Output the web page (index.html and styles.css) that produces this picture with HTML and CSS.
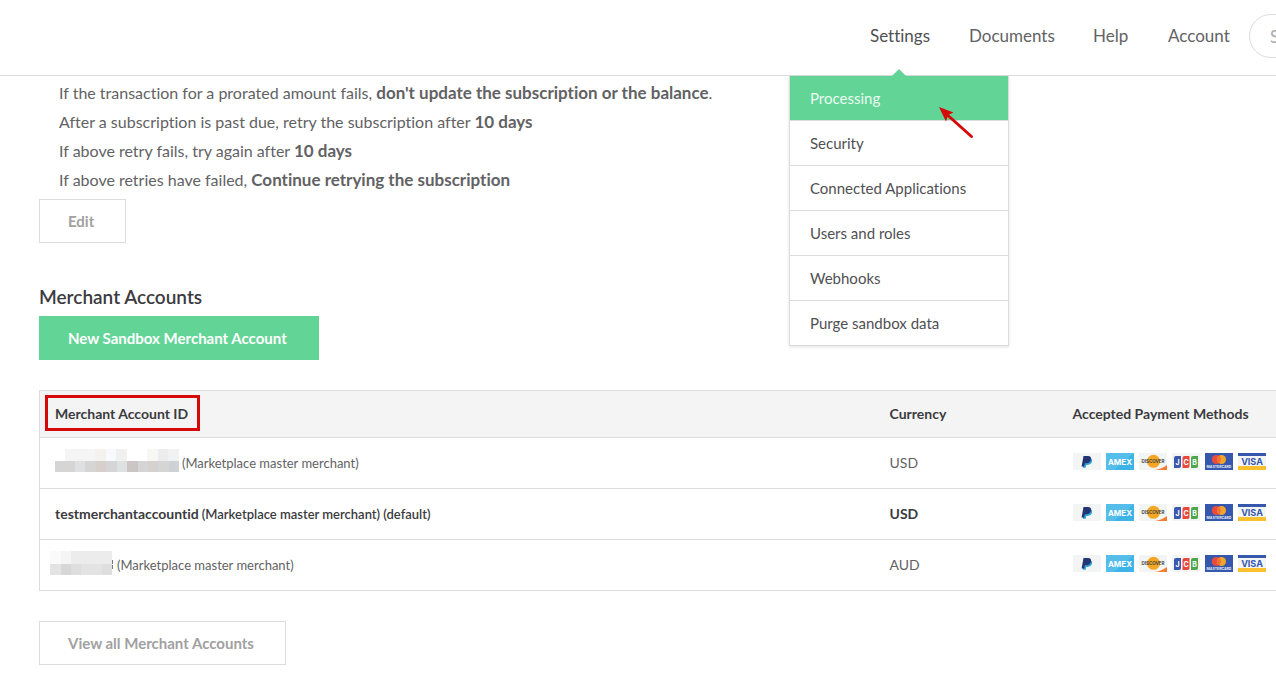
FILE: index.html
```html
<!DOCTYPE html>
<html lang="en">
<head>
<meta charset="utf-8">
<title>Processing</title>
<link rel="stylesheet" href="styles.css">
</head>
<body>
<header class="topbar">
  <nav class="nav" aria-label="Main">
    <div class="nav-item">
      <a class="nav-link current" href="#">Settings</a>
      <div class="menu">
        <a class="menu-link active" href="#">Processing</a>
        <a class="menu-link" href="#">Security</a>
        <a class="menu-link" href="#">Connected Applications</a>
        <a class="menu-link" href="#">Users and roles</a>
        <a class="menu-link" href="#">Webhooks</a>
        <a class="menu-link" href="#">Purge sandbox data</a>
        <svg class="pointer" width="36" height="34" viewBox="0 0 36 34" aria-hidden="true"><path d="M9 8.500L32.500 29.500" stroke="#d60808" stroke-width="3" stroke-linecap="round"/><path d="M0 0L14.500 5.500L9 8L7 14.500z" fill="#d60808"/></svg>
      </div>
    </div>
    <a class="nav-link" href="#">Documents</a>
    <a class="nav-link" href="#">Help</a>
    <a class="nav-link" href="#">Account</a>
    <input class="search" type="search" placeholder="Search" aria-label="Search">
  </nav>
</header>

<main class="content">
  <ul class="rules">
    <li>If the transaction for a prorated amount fails, <strong>don't update the subscription or the balance</strong>.</li>
    <li>After a subscription is past due, retry the subscription after <strong>10 days</strong></li>
    <li>If above retry fails, try again after <strong>10 days</strong></li>
    <li>If above retries have failed, <strong>Continue retrying the subscription</strong></li>
  </ul>
  <button class="button" type="button">Edit</button>

  <h2 class="heading">Merchant Accounts</h2>
  <button class="button primary" type="button">New Sandbox Merchant Account</button>

  <table class="accounts">
    <thead>
      <tr><th class="col-id"><span class="marked">Merchant Account ID</span></th><th class="col-currency">Currency</th><th>Accepted Payment Methods</th></tr>
    </thead>
    <tbody>
      <tr>
        <td><div class="account"><svg class="mosaic" width="129" height="24" viewBox="0 0 129 24" aria-hidden="true" shape-rendering="crispEdges"><path d="M15 0h30v12H15z" fill="#f5f5f5"/><path d="M45 0h11v12H45z" fill="#f4f1ef"/><path d="M56 0h10v12H56z" fill="#f7f9fc"/><path d="M66 0h11v12H66z" fill="#f0f0f0"/><path d="M97 0h11v12H97z" fill="#f7f7f4"/><path d="M108 0h10v12h-10z" fill="#ececec"/><path d="M118 0h11v12h-11z" fill="#f1f1f1"/><path d="M5 12h124v11H5z" fill="#d5d5d5"/><path d="M25 12h10v11H25zM67 12h10v11H67z" fill="#dfe0e2"/><path d="M46 12h10v11H46z" fill="#d6cfcb"/><path d="M77 12h11v11H77z" fill="#cbc6c5"/><path d="M98 12h10v11H98z" fill="#d4d1cf"/><path d="M119 12h10v11h-10z" fill="#d0d1d6"/></svg><small>(Marketplace master merchant)</small></div></td>
        <td>USD</td>
        <td><div class="cards">
          <svg><g id="paypal"><rect width="28" height="17" fill="#f3f4f4"/><path d="M11.300 5.200h5.200c2.400 0 3 1.500 2.500 3.400-.6 2.400-2.100 3.300-4.500 3.300h-1.300l-.5 2.900H9.800z" fill="#2fa5dc"/><path d="M10.500 3h4.600c2.300 0 3.400 1.200 2.900 3.500-.5 2.500-2.100 3.700-4.500 3.700h-1.700l-.6 3.400H8.600z" fill="#253573"/></g></svg>
          <svg><g id="amex"><rect width="28" height="17" fill="#3db4e7"/><path d="M0 0h28L8 17H0z" fill="#55bdea"/><text x="14" y="11.500" font-size="8" text-anchor="middle" class="mark" fill="#fff">AMEX</text></g></svg>
          <svg><g id="discover"><rect width="28" height="17" fill="#f3f4f4"/><circle cx="14.500" cy="8.300" r="6.500" fill="#f5a623"/><path d="M28 12v5H16q7-1 12-5z" fill="#f47b30"/><text x="14" y="10" font-size="4.500" text-anchor="middle" class="mark" fill="#444">DISCOVER</text></g></svg>
          <svg><g id="jcb"><rect width="28" height="17" fill="#f3f4f4"/><path d="M4 3h5v10q0 2-2 2H2V5q0-2 2-2z" fill="#3a58ad"/><path d="M12.500 3H17.500v10q0 2-2 2h-5V5q0-2 2-2z" fill="#e8483a"/><path d="M21 3H26v10q0 2-2 2h-5V5q0-2 2-2z" fill="#4da64b"/><g class="mark" font-size="7" text-anchor="middle" fill="#fff"><text x="5.500" y="11.500">J</text><text x="14" y="11.500">C</text><text x="22.500" y="11.500">B</text></g></g></svg>
          <svg><g id="mastercard"><rect width="28" height="17" fill="#3557ae"/><circle cx="11.300" cy="6.500" r="4.500" fill="#ea4b3c"/><circle cx="16.500" cy="6.500" r="4.500" fill="#f6a32c"/><path d="M14 2.800a4.500 4.500 0 0 1 0 7.400a4.500 4.500 0 0 1 0-7.400" fill="#ef7236"/><text x="14" y="15" font-size="3.500" text-anchor="middle" class="mark" fill="#e6ebf6">MASTERCARD</text></g></svg>
          <svg><g id="visa"><rect width="28" height="17" fill="#f3f4f4"/><path d="M0 0h28v3H0z" fill="#3557ae"/><path d="M0 13h28v4H0z" fill="#fbc02f"/><text x="14" y="11.500" font-size="9" text-anchor="middle" class="mark" fill="#3557ae">VISA</text></g></svg>
        </div></td>
      </tr>
      <tr class="default">
        <td><div class="account">testmerchantaccountid <small>(Marketplace master merchant) (default)</small></div></td>
        <td>USD</td>
        <td><div class="cards"><svg><use href="#paypal"/></svg><svg><use href="#amex"/></svg><svg><use href="#discover"/></svg><svg><use href="#jcb"/></svg><svg><use href="#mastercard"/></svg><svg><use href="#visa"/></svg></div></td>
      </tr>
      <tr>
        <td><div class="account"><svg class="mosaic" width="64" height="24" viewBox="0 0 64 24" aria-hidden="true" shape-rendering="crispEdges"><path d="M0 0h62v13H0z" fill="#ececec"/><path d="M0 0h11v13H0z" fill="#fafafa"/><path d="M11 0h10v13H11z" fill="#f5f5f5"/><path d="M0 13h62v11H0z" fill="#e3e3e3"/><path d="M11 13h10v11H11z" fill="#d7d7d8"/><path d="M21 13h10v11H21zM52 13h10v11H52z" fill="#dededf"/><path d="M62 9h1v4h-1zM62 14h1v4h-1z" fill="#777"/></svg><small>(Marketplace master merchant)</small></div></td>
        <td>AUD</td>
        <td><div class="cards"><svg><use href="#paypal"/></svg><svg><use href="#amex"/></svg><svg><use href="#discover"/></svg><svg><use href="#jcb"/></svg><svg><use href="#mastercard"/></svg><svg><use href="#visa"/></svg></div></td>
      </tr>
    </tbody>
  </table>
  <button class="button" type="button">View all Merchant Accounts</button>
</main>
</body>
</html>
```
FILE: styles.css
```css
* { box-sizing: border-box; }
body {
  margin: 0;
  overflow-x: hidden;
  background: #fff;
  color: #626264;
  font: 16px/29px Lato, "Open Sans", sans-serif;
  font-variant-ligatures: none;
}
a { color: inherit; text-decoration: none; }
.mark { font-family: Inter, sans-serif; font-weight: 700; }

.topbar { height: 76px; border-bottom: 1px solid #dcdcdc; }
.nav {
  display: grid;
  grid-template-columns: 99px 124px 75px 101px 180px;
  justify-content: end;
  align-items: center;
  margin-right: -153px;
  font-size: 17px;
}
.nav-item { position: relative; }
.nav-link { display: block; padding: 0 20px; line-height: 72px; }
.nav-link.current { color: #505053; }
.search {
  width: 180px;
  height: 44px;
  padding: 0 20px;
  border: 1px solid #dcdcdc;
  border-radius: 22px;
  background: #fff;
  font: 17px Lato, sans-serif;
}
.search::placeholder { color: #aaa; }

.menu {
  position: absolute;
  z-index: 1;
  top: 76px;
  left: -61px;
  width: 220px;
  border: 1px solid #dcdcdc;
  border-top: 0;
  background: #fff;
  box-shadow: 0 1px 3px rgba(0, 0, 0, .12);
  color: #505053;
  font-size: 15px;
}
.menu::before {
  content: "";
  position: absolute;
  top: -7px;
  left: 102px;
  border: solid transparent;
  border-width: 0 7px 7px;
  border-bottom-color: #62d496;
}
.menu-link { display: block; padding: 0 20px; line-height: 44px; }
.menu-link + .menu-link { border-top: 1px solid #dcdcdc; }
.menu-link.active { background: #62d496; color: #eafbf1; }
.pointer { position: absolute; top: 31px; left: 149px; fill: none; }

.content { padding: 2px 0 10px 39px; }
.rules { margin: 0; padding: 0 20px 5px; list-style: none; font-size: 16px; }
.rules strong { font-size: 17px; }
.rules li { height: 29px; }
.button {
  display: block;
  height: 44px;
  padding: 0 31px 0 28px;
  border: 1px solid #dcdcdc;
  background: #fff;
  color: #a1a1a1;
  font: bold 15px Lato, sans-serif;
}
.button.primary { border-color: #62d496; background: #62d496; color: #fff; }
.heading { margin: 39px 0 5px; color: #3b3b40; font-size: 19px; font-weight: 600; line-height: 29px; }

.accounts {
  width: calc(100% + 16px);
  margin: 30px 0;
  border: 1px solid #dcdcdc;
  border-collapse: collapse;
  table-layout: fixed;
  font-size: 14px;
  line-height: 24px;
}
.accounts th, .accounts td { padding: 0 15px; text-align: left; }
.accounts th { height: 47px; background: #f4f4f4; color: #3b3b40; }
.accounts td { height: 51px; border-top: 1px solid #dcdcdc; }
.accounts small { font-size: 13px; }
.accounts .default { color: #3b3b40; font-weight: bold; }
.accounts .default small { font-weight: 600; }
.accounts .col-id { width: 835px; }
.accounts .col-currency { width: 183px; }
.marked { position: relative; }
.marked::after {
  content: "";
  position: absolute;
  inset: -10px -12px -9px -10px;
  border: 3px solid #d60808;
}
.account { display: flex; align-items: center; gap: 3px; }
.mosaic { flex: none; margin: 0 0 4px -5px; }
.cards { display: flex; gap: 5px; margin-bottom: 4px; }
.cards svg { width: 28px; height: 17px; flex: none; }
```
